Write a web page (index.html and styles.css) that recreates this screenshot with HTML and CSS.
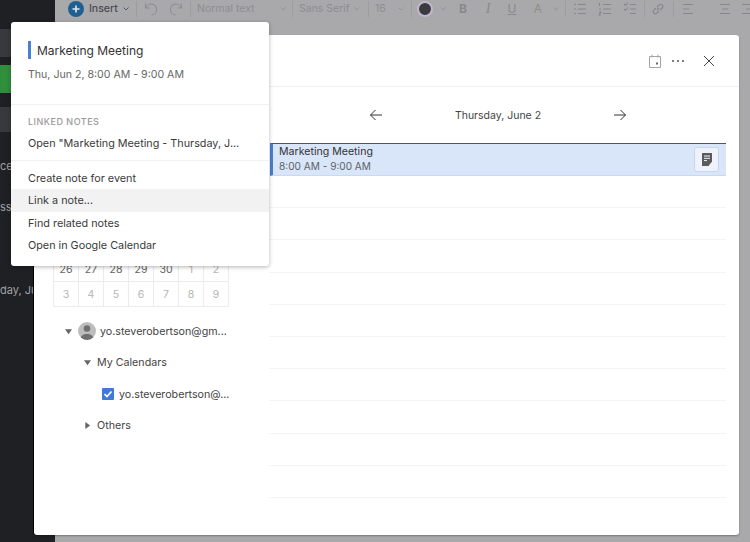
FILE: index.html
```html
<!DOCTYPE html>
<html lang="en">
<head>
<meta charset="utf-8">
<title>Calendar</title>
<link rel="stylesheet" href="styles.css">
</head>
<body>
<div class="app">
  <aside class="sidebar">
    <div class="side-band side-band-a"></div>
    <div class="side-band side-green"></div>
    <div class="side-band side-band-b"></div>
    <div class="side-text side-ce">ces</div>
    <div class="side-text side-ss">ss</div>
    <div class="side-text side-day">day, Jun</div>
  </aside>
  <main class="editor">
    <div class="toolbar">
      <span class="plus"><svg width="14" height="14" viewBox="0 0 14 14"><path d="M7 3.500v7M3.500 7h7" stroke="#dfe9f2" stroke-width="1.600"/></svg></span>
      <span class="tb-label tb-insert ml5">Insert</span>
      <svg class="caret ml5" width="8" height="6" viewBox="0 0 8 6"><path d="M1.500 1.500 4 4l2.500-2.500" fill="none" stroke="#55585e"/></svg>
      <span class="tb-sep ml6"></span>
      <svg class="tb-icon ml5" width="18" height="18" viewBox="0 0 18 18"><path d="M3.500 3.500v4.500H8M3.800 8A5.500 5.500 0 1 1 9.500 15" fill="none" stroke="#8d8f93" stroke-width="1.100"/></svg>
      <svg class="tb-icon ml7" width="18" height="18" viewBox="0 0 18 18"><path d="M14.500 3.500v4.500H10M14.200 8A5.500 5.500 0 1 0 8.500 15" fill="none" stroke="#8d8f93" stroke-width="1.100"/></svg>
      <span class="tb-sep ml5"></span>
      <span class="tb-label tb-style ml6">Normal text</span>
      <svg class="caret" width="8" height="6" viewBox="0 0 8 6"><path d="M1.500 1.500 4 4l2.500-2.500" fill="none" stroke="#919296"/></svg>
      <span class="tb-sep ml5"></span>
      <span class="tb-label tb-font ml6">Sans Serif</span>
      <svg class="caret" width="8" height="6" viewBox="0 0 8 6"><path d="M1.500 1.500 4 4l2.500-2.500" fill="none" stroke="#919296"/></svg>
      <span class="tb-sep ml7"></span>
      <span class="tb-label tb-size ml6">16</span>
      <svg class="caret" width="8" height="6" viewBox="0 0 8 6"><path d="M1.500 1.500 4 4l2.500-2.500" fill="none" stroke="#919296"/></svg>
      <span class="tb-sep ml6"></span>
      <span class="swatch ml5"></span>
      <svg class="caret ml6" width="8" height="6" viewBox="0 0 8 6"><path d="M1.500 1.500 4 4l2.500-2.500" fill="none" stroke="#919296"/></svg>
      <span class="tb-letter tb-b ml6">B</span>
      <span class="tb-letter tb-i ml5">I</span>
      <span class="tb-letter tb-u ml4">U</span>
      <span class="tb-letter tb-a ml6">A</span>
      <svg class="caret ml4" width="8" height="6" viewBox="0 0 8 6"><path d="M1.500 1.500 4 4l2.500-2.500" fill="none" stroke="#919296"/></svg>
      <span class="tb-sep ml5"></span>
      <svg class="tb-icon ml7" width="14" height="14" viewBox="0 0 14 14"><path d="M5 2.500h8M5 7h8M5 11.500h8M1 2.500h2M1 7h2M1 11.500h2" stroke="#85878b" stroke-width="1.100"/></svg>
      <svg class="tb-icon ml11" width="14" height="14" viewBox="0 0 14 14"><path d="M5 2.500h8M5 7h8M5 11.500h8M1.500 1v3M1 7h2M1 10h2l-2 3h2" fill="none" stroke="#85878b" stroke-width="1.100"/></svg>
      <svg class="tb-icon ml11" width="14" height="14" viewBox="0 0 14 14"><path d="M7 2.500h6M7 7h6M7 11.500h6M1 7l1.500 1.500L5 5.500M1 2l1.500 1.500L5 .5" fill="none" stroke="#85878b" stroke-width="1.100"/></svg>
      <span class="tb-sep ml7"></span>
      <svg class="tb-icon ml6" width="14" height="14" viewBox="0 0 14 14"><path d="M6 8l2-2M5 6 2.800 8.200a2.100 2.100 0 0 0 3 3L8 9M6 5l2.200-2.200a2.100 2.100 0 0 1 3 3L9 8" fill="none" stroke="#85878b" stroke-width="1.100"/></svg>
      <span class="tb-sep ml8"></span>
      <svg class="tb-icon ml7" width="14" height="14" viewBox="0 0 14 14"><path d="M2 2.500h10M2 7h6M2 11.500h10" stroke="#85878b" stroke-width="1.100"/></svg>
      <svg class="tb-icon ml23" width="14" height="14" viewBox="0 0 14 14"><path d="M2 2.500h10M4 7h6M2 11.500h10" stroke="#85878b" stroke-width="1.100"/></svg>
      <svg class="tb-icon ml8" width="14" height="14" viewBox="0 0 14 14"><path d="M2 2.500h12M6 7h8M2 11.500h12" stroke="#85878b" stroke-width="1.100"/></svg>
    </div>
  </main>
</div>

<section class="modal">
  <header class="modal-head">
    <svg class="head-cal" width="12" height="14" viewBox="0 0 12 14"><path d="M.5 2.500h11v11H.5zM3 .5v3M9 .5v3" fill="none" stroke="#a5a5a5"/><rect x="7" y="8.500" width="2" height="2" fill="#6a6a6a"/></svg>
    <svg class="head-dots" width="14" height="4" viewBox="0 0 14 4"><circle cx="2" cy="2" r="1" fill="#555"/><circle cx="7" cy="2" r="1" fill="#555"/><circle cx="12" cy="2" r="1" fill="#555"/></svg>
    <svg class="head-close" width="12" height="12" viewBox="0 0 12 12"><path d="M1 1l10 10M11 1 1 11" stroke="#444"/></svg>
  </header>
  <div class="modal-body">
    <div class="left-col">
      <div class="month">
        <span class="d">26</span><span class="d">27</span><span class="d">28</span><span class="d">29</span><span class="d">30</span><span class="d m">1</span><span class="d m">2</span>
        <span class="d m">3</span><span class="d m">4</span><span class="d m">5</span><span class="d m">6</span><span class="d m">7</span><span class="d m">8</span><span class="d m">9</span>
      </div>
      <div class="tree">
        <div class="tree-row tr-account">
          <svg class="tri" width="7" height="7" viewBox="0 0 8 8"><path d="M0 1.500h8L4 7z" fill="#666"/></svg>
          <span class="avatar"><svg width="18" height="18" viewBox="0 0 18 18"><circle cx="9" cy="6.500" r="3.300" fill="#6f6f6f"/><path d="M2.500 18c0-4.500 3-6 6.500-6s6.500 1.500 6.500 6z" fill="#6f6f6f"/></svg></span>
          <span class="tree-text">yo.steverobertson@gm...</span>
        </div>
        <div class="tree-row tr-cals">
          <svg class="tri" width="7" height="7" viewBox="0 0 8 8"><path d="M0 1.500h8L4 7z" fill="#666"/></svg>
          <span class="tree-text">My Calendars</span>
        </div>
        <div class="tree-row tr-cal">
          <span class="check"><svg width="12" height="12" viewBox="0 0 12 12"><path d="M2.500 6.200 5 8.500l4.500-5" fill="none" stroke="#fff" stroke-width="1.700"/></svg></span>
          <span class="tree-text">yo.steverobertson@...</span>
        </div>
        <div class="tree-row tr-others">
          <svg class="tri" width="7" height="7" viewBox="0 0 8 8"><path d="M1.500 0v8L7 4z" fill="#666"/></svg>
          <span class="tree-text">Others</span>
        </div>
      </div>
    </div>
    <div class="right-col">
      <div class="day-nav">
        <svg width="14" height="12" viewBox="0 0 14 12"><path d="M13 6H1.500M6.500 1l-5 5 5 5" fill="none" stroke="#333"/></svg>
        <span class="day-title">Thursday, June 2</span>
        <svg width="14" height="12" viewBox="0 0 14 12"><path d="M1 6h11.500M7.500 1l5 5-5 5" fill="none" stroke="#333"/></svg>
      </div>
      <div class="slots">
        <div class="event">
          <div class="event-text">
            <div class="event-title">Marketing Meeting</div>
            <div class="event-time">8:00 AM - 9:00 AM</div>
          </div>
          <button class="note-btn" type="button"><svg width="10" height="13" viewBox="0 0 10 13"><path d="M0 0h10v8.500L6.500 13H0z" fill="#5a5a5a"/><path d="M2 3h6M2 5.300h6M2 7.600h3" stroke="#eef3fb"/></svg></button>
        </div>
        <div class="slot"></div><div class="slot"></div><div class="slot"></div><div class="slot"></div><div class="slot"></div>
        <div class="slot"></div><div class="slot"></div><div class="slot"></div><div class="slot"></div><div class="slot"></div>
      </div>
    </div>
  </div>
</section>

<section class="popover">
  <div class="pop-head">
    <div class="pop-title">Marketing Meeting</div>
    <div class="pop-time">Thu, Jun 2, 8:00 AM - 9:00 AM</div>
  </div>
  <div class="pop-linked">
    <div class="pop-label">LINKED NOTES</div>
    <div class="pop-item">Open "Marketing Meeting - Thursday, J...</div>
  </div>
  <div class="pop-actions">
    <div class="pop-item">Create note for event</div>
    <div class="pop-item pop-hover">Link a note...</div>
    <div class="pop-item">Find related notes</div>
    <div class="pop-item">Open in Google Calendar</div>
  </div>
</section>
</body>
</html>
```
FILE: styles.css
```css
* { box-sizing: border-box; }
html, body { margin: 0; height: 100%; }
body {
  width: 750px;
  height: 542px;
  overflow: hidden;
  position: relative;
  font-family: Inter, "Liberation Sans", sans-serif;
  color: #333;
  background: #a9a9ac;
}
.app { display: flex; height: 542px; }
.sidebar {
  width: 55px;
  flex: none;
  background: #1f2024;
  position: relative;
  overflow: hidden;
}
.side-band { position: absolute; left: 0; width: 55px; }
.side-band-a { top: 29px; height: 28px; background: #38393c; }
.side-green { top: 65px; height: 28px; background: #2f8f3c; }
.side-band-b { top: 107px; height: 25px; background: #38393c; }
.side-text { position: absolute; left: 0; font-size: 11px; color: #a0a1a3; white-space: nowrap; }
.side-ce { top: 159px; }
.side-ss { top: 200px; }
.side-day { top: 283px; }

.editor { flex: 1; min-width: 0; background: #a9a9ac; }
.toolbar {
  display: flex;
  align-items: center;
  height: 17px;
  padding-left: 13px;
  flex-wrap: nowrap;
}
.toolbar > * { flex: none; }
.ml4 { margin-left: 4px; }
.ml5 { margin-left: 5px; }
.ml6 { margin-left: 6px; }
.ml7 { margin-left: 7px; }
.ml8 { margin-left: 8px; }
.ml11 { margin-left: 11px; }
.ml23 { margin-left: 23px; }
.plus {
  width: 16px; height: 16px;
  border-radius: 50%;
  background: #1f5f92;
  display: flex; align-items: center; justify-content: center;
}
.tb-label { font-size: 10.500px; color: #8c8d91; white-space: nowrap; }
.tb-insert { color: #4a4c51; font-weight: 500; width: 28px; }
.tb-style { width: 82px; }
.tb-font { width: 54px; }
.tb-size { width: 22px; }
.tb-sep { width: 1px; height: 16px; background: #9c9c9f; }
.swatch {
  width: 16px; height: 16px; border-radius: 50%;
  background: #3a3b40;
  border: 2px solid #c4b6cc;
}
.tb-letter { font-size: 12px; color: #88898d; width: 20px; text-align: center; }
.tb-b { font-weight: 700; }
.tb-i { font-style: italic; font-family: "Liberation Serif", serif; font-size: 14px; }
.tb-u { text-decoration: underline; }
.tb-a { color: #8e8e84; }

.modal {
  position: absolute;
  left: 34px; top: 35px;
  width: 705px; height: 500px;
  background: #fff;
  border-radius: 3px;
  display: flex;
  flex-direction: column;
  box-shadow: -1px 0 0 #000, 0 1px 2px rgba(0,0,0,.3);
}
.modal-head {
  height: 52px;
  flex: none;
  border-bottom: 1px solid #f0f0f0;
  display: flex;
  align-items: center;
  justify-content: flex-end;
  padding: 0 24px 0 0;
}
.head-cal { margin-right: 10px; }
.head-dots { margin-right: 18px; }
.modal-body { flex: 1; display: flex; min-height: 0; }
.left-col {
  width: 235px;
  flex: none;
  padding: 169px 0 0 19px;
}
.month {
  display: grid;
  grid-template-columns: repeat(7, 25px);
  grid-auto-rows: 25px;
  width: 176px;
  border-left: 1px solid #ececec;
  border-bottom: 1px solid #ececec;
}
.d {
  display: flex; align-items: center; justify-content: center;
  font-size: 10.500px;
  color: #666;
  border-right: 1px solid #ececec;
  border-top: 1px solid #ececec;
}
.d.m { color: #b5b5b5; }
.tree { margin-top: 8.500px; font-size: 10.700px; color: #444; }
.tree-row { display: flex; align-items: center; height: 31.500px; }
.tree-text { white-space: nowrap; }
.tr-account { padding-left: 12px; }
.avatar {
  width: 18px; height: 18px; border-radius: 50%;
  background: #bdbdbd;
  margin: 0 4px 0 6px;
  overflow: hidden;
  flex: none;
  display: block;
}
.avatar svg { display: block; }
.tr-cals { padding-left: 31px; }
.tr-cals .tri, .tr-others .tri { margin-right: 6px; }
.tr-cal { padding-left: 49px; }
.check {
  width: 12px; height: 12px;
  background: #3f7bd6;
  border-radius: 1px;
  margin-right: 5px;
  flex: none;
  display: block;
}
.check svg { display: block; }
.tr-others { padding-left: 31px; }

.right-col {
  flex: 1;
  min-width: 0;
  padding-right: 13px;
  display: flex;
  flex-direction: column;
}
.day-nav {
  height: 56px;
  flex: none;
  display: flex;
  align-items: center;
  justify-content: space-between;
  padding: 0 99px 0 100px;
}
.day-title { font-size: 10.500px; color: #444; }
.slots { display: flex; flex-direction: column; }
.event {
  height: 33px;
  margin-left: 1px;
  background: #d9e5f8;
  border-top: 1px solid #555;
  border-left: 3px solid #4a7fcf;
  border-bottom: 1px solid #cad9f1;
  display: flex;
  align-items: center;
  justify-content: space-between;
  padding: 0 7px 0 6px;
}
.event-title { font-size: 10.600px; color: #333; line-height: 14px; }
.event-time { font-size: 10.100px; color: #5f6368; line-height: 15px; }
.note-btn {
  width: 25px; height: 25px;
  padding: 0;
  background: #eef3fb;
  border: 1px solid #c9d6ea;
  border-radius: 3px;
  display: flex; align-items: center; justify-content: center;
}
.slot { height: 32.200px; border-bottom: 1px solid #f4f4f4; flex: none; }

.popover {
  position: absolute;
  left: 11px; top: 22px;
  width: 258px; height: 244px;
  background: #fff;
  border-radius: 3px;
  box-shadow: 0 1px 4px rgba(0,0,0,.3);
  font-size: 10.800px;
  color: #3a3a3a;
}
.pop-head { height: 83px; padding: 19px 0 0 17px; border-bottom: 1px solid #f1f1f1; }
.pop-title {
  font-size: 12px;
  color: #333;
  border-left: 3px solid #4a7fd6;
  padding-left: 6px;
  height: 18px;
  line-height: 19px;
}
.pop-time { margin-top: 9px; font-size: 10.600px; color: #666; line-height: 14px; }
.pop-linked { height: 56px; padding-top: 11px; border-bottom: 1px solid #f1f1f1; }
.pop-label { font-size: 9px; letter-spacing: .5px; color: #999; padding-left: 17px; line-height: 12px; font-weight: 500; }
.pop-linked .pop-item { margin-top: 4px; }
.pop-actions { padding-top: 6px; }
.pop-item { height: 22.400px; line-height: 24px; padding-left: 17px; white-space: nowrap; }
.pop-hover { background: #f2f2f2; }
```
